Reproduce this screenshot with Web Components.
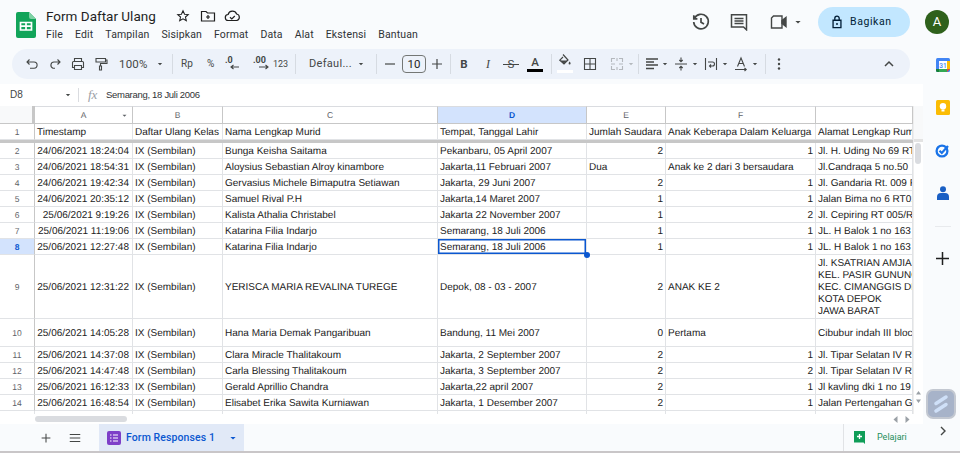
<!DOCTYPE html>
<html lang="id">
<head>
<meta charset="utf-8">
<title>Form Daftar Ulang</title>
<style>
  html, body { margin: 0; height: 100%; overflow: hidden; background: #f9fbfd; }
  body { font-family: Roboto, "Liberation Sans", sans-serif; }
</style>
</head>
<body>
<sheet-app>
  <doc-header slot="top"></doc-header>
  <tool-bar></tool-bar>
  <formula-bar cell="D8" value="Semarang, 18 Juli 2006"></formula-bar>
  <sheet-grid></sheet-grid>
  <sheet-tabs name="Form Responses 1"></sheet-tabs>
  <side-panel slot="side"></side-panel>
</sheet-app>

<script>
const ICON = {
  caret: '<path d="M4.5 6.5h7L8 10z" fill="currentColor" stroke="none"/>',
  undo: '<path d="M5.5 3.5 3 6l2.5 2.5M3.2 6H10a3 3 0 0 1 0 6.2H6"/>',
  redo: '<path d="M10.5 3.5 13 6l-2.5 2.5M12.8 6H7a3.2 3.2 0 0 0-1 6.2h2"/>',
  print: '<path d="M4.5 5.5V2.5h7v3M4.5 11.5h-2v-5a1 1 0 0 1 1-1h9a1 1 0 0 1 1 1v5h-2M4.5 9.5h7v4h-7z"/>',
  paint: '<path d="M3 2.5h9.5v3.5H3zM12.5 4H14v3.5H7.5V10M6.5 10h2v4h-2z"/>',
  fill: '<path d="M6 1.5 11 7 7 11 2.8 7.2 6 4" stroke-width="1.2"/><path d="M3.2 7.5h7L7 10.6zM12.6 8.5c.6.9 1 1.4 1 1.9a1 1 0 0 1-2 0c0-.5.4-1 1-1.9z" fill="currentColor" stroke="none"/>',
  borders: '<path d="M2.5 2.5h11v11h-11zM8 2.5v11M2.5 8h11"/>',
  merge: '<path d="M2.5 6V2.5H6M2.5 10v3.5H6M13.5 6V2.5H10M13.5 10v3.5H10M8 2v3M8 11v3M2 8h4M14 8h-4"/>',
  align: '<path d="M2 3h12M2 6h8M2 9h12M2 12.5h8" stroke-width="1.4"/>',
  valign: '<path d="M2 8h12M8 1.5v4M6.3 4 8 5.7 9.7 4M8 14.5v-4M6.3 12 8 10.3 9.7 12"/>',
  wrap: '<path d="M2.5 2v12M13.5 2v12M5 6h4.5a2 2 0 0 1 0 4H7M8 8.5 6.5 10 8 11.5"/>',
  rotate: '<path d="M4.5 10.5 8 2l3.5 8.5M5.8 7.5h4.4M2 13.5h11M11.5 12l1.7 1.5-1.7 1.5"/>',
  more: '<circle cx="8" cy="3.5" r="1.2" fill="currentColor" stroke="none"/><circle cx="8" cy="8" r="1.2" fill="currentColor" stroke="none"/><circle cx="8" cy="12.5" r="1.2" fill="currentColor" stroke="none"/>',
  up: '<path d="M4 10 8 6l4 4" stroke-width="1.5"/>',
  minus: '<path d="M3 8h10" stroke-width="1.2"/>',
  plus: '<path d="M8 3v10M3 8h10" stroke-width="1.2"/>'
};

function svgIcon(name, size) {
  return `<svg width="${size}" height="${size}" viewBox="0 0 16 16" fill="none" stroke="currentColor" stroke-width="1.1">${ICON[name]}</svg>`;
}

class SheetApp extends HTMLElement {
  constructor() {
    super();
    this.attachShadow({ mode: 'open' });
    this.shadowRoot.innerHTML = `
      <style>
        :host { display: grid; grid-template-columns: 923px 37px; grid-template-rows: 49px 402px 2px; width: 960px; height: 453px; overflow: hidden; }
        .top { grid-column: 1 / -1; }
        .main { display: flex; flex-direction: column; min-width: 0; }
        .edge { grid-column: 1 / -1; background: #c9c6c8; }
      </style>
      <div class="top"><slot name="top"></slot></div>
      <div class="main"><slot></slot></div>
      <slot name="side"></slot>
      <div class="edge"></div>
    `;
  }
}

class DocHeader extends HTMLElement {
  constructor() {
    super();
    this.attachShadow({ mode: 'open' });
    const menus = ['File', 'Edit', 'Tampilan', 'Sisipkan', 'Format', 'Data', 'Alat', 'Ekstensi', 'Bantuan'];
    this.shadowRoot.innerHTML = `
      <style>
        :host { display: flex; height: 49px; box-sizing: border-box; padding: 7px 11px 0 16px; color: #3c4043; }
        .logo { width: 20px; height: 26px; margin: 5px 10px 0 0; flex: none; }
        .names { flex: 1; min-width: 0; }
        .title { display: flex; align-items: center; height: 18px; color: #1f1f1f; }
        .title b { font: 400 13.5px/18px Roboto, sans-serif; width: 130px; flex: none; white-space: nowrap; }
        .title svg { margin-right: 8px; flex: none; }
        nav { display: flex; gap: 12px; margin-top: 3px; font: 400 10.5px/14px Roboto, sans-serif; letter-spacing: .13px; color: #303336; }
        .acts { display: flex; align-items: flex-start; flex: none; color: #444746; }
        .acts svg { flex: none; }
        .share { display: flex; align-items: center; width: 92px; height: 30px; margin-left: 14px; background: #c2e7ff; border-radius: 15px; box-sizing: border-box; padding-left: 12px; color: #001d35; font: 400 10.5px/30px Roboto, sans-serif; letter-spacing: .6px; gap: 6px; }
        .share span { white-space: nowrap; }
        .avatar { width: 24px; height: 24px; border-radius: 50%; background: #2f611c; color: #fff; text-align: center; font: 400 13px/24px Roboto, sans-serif; margin-left: 15px; margin-top: 3px; }
      </style>
      <svg class="logo" viewBox="0 0 20 26">
        <path d="M2 0h11l7 7v17a2 2 0 0 1-2 2H2a2 2 0 0 1-2-2V2a2 2 0 0 1 2-2z" fill="#12a45a"/>
        <path d="M13 0l7 7h-5a2 2 0 0 1-2-2z" fill="#7fd2a5"/>
        <path d="M4.5 10.5h11V18h-11zM10 10.5V18M4.5 14.2h11" fill="none" stroke="#fff" stroke-width="1.7"/>
      </svg>
      <div class="names">
        <div class="title">
          <b>Form Daftar Ulang</b>
          <svg width="14" height="14" viewBox="0 0 16 16" fill="none" stroke="currentColor" stroke-width="1.2"><path d="m8 2 1.8 4 4.2.4-3.2 2.8 1 4.2L8 11.2l-3.8 2.2 1-4.2L2 6.4 6.2 6z"/></svg>
          <svg width="16" height="14" viewBox="0 0 16 14" fill="none" stroke="currentColor" stroke-width="1.2" style="margin-left:2px"><path d="M1.5 2.500H6L7.500 4h7v8h-13zM8 6v4M6 8h4"/></svg>
          <svg width="17" height="14" viewBox="0 0 17 14" fill="none" stroke="currentColor" stroke-width="1.2"><path d="M4.5 11.5a3 3 0 0 1-.4-6 4.5 4.5 0 0 1 8.5-.5 3.3 3.3 0 0 1 0 6.5zM6 8.300l1.800 1.700 3-3"/></svg>
        </div>
        <nav>${menus.map((m) => `<span>${m}</span>`).join('')}</nav>
      </div>
      <div class="acts">
        <svg width="20" height="20" viewBox="0 0 20 20" fill="none" stroke="currentColor" stroke-width="1.7" style="margin-top:5px"><path d="M3.4 6.4A7.3 7.3 0 1 1 2.7 10M2.8 3.3v3.6h3.6M10 6v4.3l3 1.8"/></svg>
        <svg width="18" height="18" viewBox="0 0 18 18" fill="none" stroke="currentColor" stroke-width="1.5" style="margin:6px 0 0 19px"><path d="M1.5 1.8h15v15l-3-2.800h-12zM4.500 5.500h9M4.500 8h9M4.500 10.500h9"/></svg>
        <svg width="18" height="16" viewBox="0 0 18 16" fill="none" stroke="currentColor" stroke-width="1.4" style="margin:7px 0 0 22px"><path d="M3.5 2H12v12H1.5V4z"/><path d="M12 6.5 16 3.500v9l-4-3z" fill="currentColor"/></svg>
        <svg width="12" height="12" viewBox="0 0 16 16" style="margin:9px 0 0 4px;color:#444746">${ICON.caret}</svg>
        <div class="share">
          <svg width="14" height="14" viewBox="0 0 16 16" fill="none" stroke="currentColor" stroke-width="1.5"><path d="M3.5 6h9v8.500h-9zM5.500 6V3.800a2.500 2.500 0 0 1 5 0V6"/><circle cx="8" cy="10.200" r="1.100" fill="currentColor" stroke="none"/></svg>
          <span>Bagikan</span>
        </div>
        <div class="avatar">A</div>
      </div>
    `;
  }
}

class ToolBar extends HTMLElement {
  constructor() {
    super();
    this.attachShadow({ mode: 'open' });
    // tiap item: jenis, isi, margin kiri
    const items = [
      ['i', 'undo', 0], ['i', 'redo', 7], ['i', 'print', 7], ['i', 'paint', 7],
      ['t', '100%', 10, 28, 'z'], ['c', '', 9], ['s', '', 8],
      ['t', 'Rp', 8, 14], ['t', '%', 12, 12], ['dec', '.0', 6, 'l'], ['dec', '.00', 10, 'r'], ['t', '123', 2, 15, 'n'], ['s', '', 7],
      ['t', 'Defaul...', 13, 42, 'z2'], ['c', '', 6], ['s', '', 11],
      ['i', 'minus', 5], ['box', '10', 4], ['i', 'plus', 3], ['s', '', 5],
      ['b', 'B', 5], ['b', 'I', 8], ['b', 'S', 7], ['b', 'A', 8], ['s', '', 8],
      ['fill', '', 5], ['i', 'borders', 9], ['d', 'merge', 11], ['cd', '', 2], ['s', '', 3],
      ['i', 'align', 5], ['c', '', 1], ['i', 'valign', 4], ['c', '', 2], ['i', 'wrap', 4], ['c', '', 2], ['i', 'rotate', 4], ['c', '', 2], ['s', '', 6],
      ['i', 'more', 5]
    ];
    const html = items.map((it) => {
      const [kind, val, ml] = it;
      const m = `style="margin-left:${ml}px"`;
      if (kind === 'i') return `<span class="i" ${m}>${svgIcon(val, 16)}</span>`;
      if (kind === 'd') return `<span class="i dis" ${m}>${svgIcon(val, 16)}</span>`;
      if (kind === 'c') return `<span class="i c" ${m}>${svgIcon('caret', 10)}</span>`;
      if (kind === 'cd') return `<span class="i c dis" ${m}>${svgIcon('caret', 10)}</span>`;
      if (kind === 's') return `<span class="sep" ${m}></span>`;
      if (kind === 't') return `<span class="t ${it[4] || ''}" style="margin-left:${ml}px;width:${it[3]}px">${val}</span>`;
      if (kind === 'box') return `<span class="box" ${m}>${val}</span>`;
      if (kind === 'dec') {
        const arrow = it[3] === 'l' ? 'M14 11H6M8.5 9 6 11l2.5 2' : 'M6 11h9M12.5 9l2.5 2-2.5 2';
        return `<span class="dec" ${m}><em>${val}</em><svg width="18" height="16" viewBox="0 0 18 16" fill="none" stroke="currentColor" stroke-width="1.1"><path d="${arrow}"/></svg></span>`;
      }
      if (kind === 'b') {
        const bar = val === 'A' ? '<u></u>' : '';
        const strike = val === 'S' ? '<s></s>' : '';
        return `<span class="b b${val}" ${m}>${val}${bar}${strike}</span>`;
      }
      if (kind === 'fill') return `<span class="i col" ${m}>${svgIcon('fill', 16)}<u></u></span>`;
      return '';
    }).join('');
    this.shadowRoot.innerHTML = `
      <style>
        :host { display: flex; align-items: center; width: 898px; height: 30px; margin: 0 0 5px 12px; box-sizing: border-box; padding-left: 12px; padding-right: 13px; background: #edf2fa; border-radius: 15px; color: #444746; font: 400 10.5px/16px Roboto, sans-serif; }
        .i { display: flex; align-items: center; justify-content: center; width: 16px; height: 16px; flex: none; }
        .c { width: 8px; }
        .c svg { flex: none; }
        .dis { color: #b4b8bd; }
        .sep { width: 1px; height: 20px; background: #d6dbe2; flex: none; }
        .t { flex: none; white-space: nowrap; font-size: 10px; letter-spacing: .2px; }
        .z { font-size: 11.5px; letter-spacing: .2px; }
        .z2 { font-size: 11px; letter-spacing: .3px; }
        .n { font-size: 9px; letter-spacing: 0; }
        .box { width: 22px; height: 16px; border: 1px solid #747775; border-radius: 4px; text-align: center; line-height: 16px; font-size: 11.5px; color: #1f1f1f; flex: none; }
        .dec { position: relative; width: 18px; height: 16px; flex: none; }
        .dec svg { display: block; }
        .dec em { position: absolute; left: 0; top: -2px; font: 700 9px/12px Roboto, sans-serif; }
        .b { position: relative; width: 16px; height: 16px; text-align: center; flex: none; font: 700 11.5px/16px Roboto, sans-serif; }
        .bI { font: italic 500 12px/16px "Liberation Serif", serif; }
        .bS { font-weight: 400; }
        .bS s { position: absolute; left: 0; right: 0; top: 8px; height: 1px; background: currentColor; }
        .bA { font-weight: 500; line-height: 12px; }
        .b u { position: absolute; left: 0; right: 0; top: 13px; height: 3px; background: #000; }
        .col { position: relative; }
        .col svg { position: relative; top: -3px; }
        .col u { position: absolute; left: 0; right: 0; top: 14px; height: 3px; background: #fff; }
        .end { margin-left: auto; }
      </style>
      ${html}
      <span class="i end">${svgIcon('up', 16)}</span>
    `;
  }
}

class FormulaBar extends HTMLElement {
  constructor() {
    super();
    this.attachShadow({ mode: 'open' });
    this.shadowRoot.innerHTML = `
      <style>
        :host { display: flex; align-items: center; height: 22px; box-sizing: border-box; background: #fff; color: #444746; font: 400 10px/14px "Liberation Sans", sans-serif; }
        .name { width: 53px; padding-left: 10px; flex: none; }
        svg { flex: none; }
        .sep { width: 1px; height: 14px; background: #dadce0; margin: 0 9px 0 5px; flex: none; }
        .fx { font: italic 400 13px/14px "Liberation Serif", serif; color: #9aa0a6; width: 18px; flex: none; }
        .val { color: #303336; font-size: 9.5px; letter-spacing: -.3px; white-space: nowrap; }
      </style>
      <span class="name">${this.getAttribute('cell')}</span>
      <svg width="10" height="10" viewBox="0 0 16 16">${ICON.caret}</svg>
      <span class="sep"></span>
      <span class="fx">fx</span>
      <span class="val">${this.getAttribute('value')}</span>
    `;
  }
}

const COLS = ['A', 'B', 'C', 'D', 'E', 'F', ''];
const ROWS = [
  [1, 16, 'Timestamp', 'Daftar Ulang Kelas', 'Nama Lengkap Murid', 'Tempat, Tanggal Lahir', 'Jumlah Saudara', 'Anak Keberapa Dalam Keluarga', 'Alamat Lengkap Rumah'],
  [2, 16, '24/06/2021 18:24:04', 'IX (Sembilan)', 'Bunga Keisha Saitama', 'Pekanbaru, 05 April 2007', 2, 1, 'Jl. H. Uding No 69 RT 001'],
  [3, 16, '24/06/2021 18:54:31', 'IX (Sembilan)', 'Aloysius Sebastian Alroy kinambore', 'Jakarta,11 Februari 2007', 'Dua', 'Anak ke 2 dari 3 bersaudara', 'Jl.Candraqa 5 no.50'],
  [4, 16, '24/06/2021 19:42:34', 'IX (Sembilan)', 'Gervasius Michele Bimaputra Setiawan', 'Jakarta, 29 Juni 2007', 2, 1, 'Jl. Gandaria Rt. 009 Rw 02'],
  [5, 16, '24/06/2021 20:35:12', 'IX (Sembilan)', 'Samuel Rival P.H', 'Jakarta,14 Maret 2007', 1, 1, 'Jalan Bima no 6 RT01'],
  [6, 16, '25/06/2021 9:19:26', 'IX (Sembilan)', 'Kalista Athalia Christabel', 'Jakarta 22 November 2007', 1, 2, 'Jl. Cepiring RT 005/RW'],
  [7, 16, '25/06/2021 11:19:06', 'IX (Sembilan)', 'Katarina Filia Indarjo', 'Semarang, 18 Juli 2006', 1, 1, 'JL. H Balok 1 no 163'],
  [8, 16, '25/06/2021 12:27:48', 'IX (Sembilan)', 'Katarina Filia Indarjo', 'Semarang, 18 Juli 2006', 1, 1, 'JL. H Balok 1 no 163'],
  [9, 64, '25/06/2021 12:31:22', 'IX (Sembilan)', 'YERISCA MARIA REVALINA TUREGE', 'Depok, 08 - 03 - 2007', 2, 'ANAK KE 2', 'Jl. KSATRIAN AMJIAD\nKEL. PASIR GUNUNG\nKEC. CIMANGGIS DEPOK\nKOTA DEPOK\nJAWA BARAT'],
  [10, 28, '25/06/2021 14:05:28', 'IX (Sembilan)', 'Hana Maria Demak Pangaribuan', 'Bandung, 11 Mei 2007', 0, 'Pertama', 'Cibubur indah III blocks'],
  [11, 16, '25/06/2021 14:37:08', 'IX (Sembilan)', 'Clara Miracle Thalitakoum', 'Jakarta, 2 September 2007', 2, 1, 'Jl. Tipar Selatan IV RT'],
  [12, 16, '25/06/2021 14:47:48', 'IX (Sembilan)', 'Carla Blessing Thalitakoum', 'Jakarta, 3 September 2007', 2, 2, 'Jl. Tipar Selatan IV RT'],
  [13, 16, '25/06/2021 16:12:33', 'IX (Sembilan)', 'Gerald Aprillio Chandra', 'Jakarta,22 april 2007', 2, 1, 'Jl kavling dki 1 no 19'],
  [14, 16, '25/06/2021 16:48:54', 'IX (Sembilan)', 'Elisabet Erika Sawita Kurniawan', 'Jakarta, 1 Desember 2007', 2, 1, 'Jalan Pertengahan Gg']
];

class SheetGrid extends HTMLElement {
  constructor() {
    super();
    this.attachShadow({ mode: 'open' });
    const head = ['<div class="corner"></div>']
      .concat(COLS.map((c) => `<div class="ch ${c === 'D' ? 'on' : ''}">${c}${c === 'A' ? `<span class="mark">${svgIcon('caret', 9)}</span>` : ''}</div>`)).join('');
    let body = '';
    ROWS.forEach((row) => {
      const n = row[0];
      body += `<div class="rh ${n === 8 ? 'on' : ''}">${n}</div>`;
      row.slice(2).forEach((v, i) => {
        const text = String(v);
        const isStamp = i === 0 && n > 1;
        const right = typeof v === 'number' || isStamp;
        const sel = n === 8 && i === 3;
        const multi = text.includes('\n');
        body += `<div class="cell ${right ? 'r' : ''} ${isStamp ? 'ts' : ''} ${sel ? 'sel' : ''} ${multi ? 'multi' : ''}"><span>${text}</span></div>`;
      });
      if (n === 1) body += '<div class="freeze"></div>';
    });
    const rowTracks = ROWS.map((r) => r[1] + 'px');
    rowTracks.splice(1, 0, '3px');
    this.shadowRoot.innerHTML = `
      <style>
        :host { display: grid; grid-template-columns: 913px 10px; grid-template-rows: 308px 10px; height: 318px; background: #fff; color: #222; font: 400 10px/12px "Liberation Sans", sans-serif; text-rendering: geometricPrecision; }
        .tbl { display: grid; grid-template-columns: 35px 98px 90px 215px 149px 79px 150px 97px; grid-template-rows: 18px ${rowTracks.join(' ')} 3px; overflow: hidden; }
        .corner { background: #f8f9fa; border-right: 3px solid #c7c7c7; border-bottom: 1px solid #c7c7c7; box-sizing: border-box; }
        .ch, .rh { display: flex; align-items: center; justify-content: center; background: #fff; color: #5f6368; font-size: 8.5px; box-sizing: border-box; position: relative; }
        .ch { border-top: 1px solid #dadce0; border-right: 1px solid #c7c7c7; border-bottom: 1px solid #c7c7c7; }
        .rh { border-right: 1px solid #c7c7c7; border-bottom: 1px solid #e1e3e6; padding-top: 1px; }
        .on { background: #d3e3fd; color: #0b57d0; font-weight: 700; }
        .mark { position: absolute; right: 3px; top: 4px; color: #5f6368; display: flex; }
        .cell { display: flex; align-items: center; min-width: 0; padding: 3px 2px 0; box-sizing: border-box; border-right: 1px solid #e1e3e6; border-bottom: 1px solid #e1e3e6; white-space: nowrap; overflow: hidden; position: relative; }
        .cell.r { justify-content: flex-end; }
        .cell.ts { padding-right: 3px; }
        .multi span { white-space: pre; }
        .sel { overflow: visible; box-shadow: inset 0 0 0 1.5px #0b57d0; }
        .sel::after { content: ""; position: absolute; right: -4px; bottom: -4px; width: 6px; height: 6px; background: #0b57d0; border-radius: 50%; z-index: 2; }
        .freeze { grid-column: 1 / -1; background: #c7c7c7; }
        .stub { border-right: 1px solid #e1e3e6; }
        .vs { background: #fff; border-left: 1px solid #eee; display: flex; flex-direction: column; }
        .vs .top { height: 36px; background: #f8f9fa; border-bottom: 3px solid #e3e3e3; box-sizing: border-box; flex: none; }
        .vs .thumb { width: 6px; height: 21px; background: #dadce0; border-radius: 3px; margin: 1px 0 0 1px; flex: none; }
        .vs .arr { margin-top: auto; padding: 0 0 3px 1px; color: #9aa0a6; font-size: 0; }
        .hs { grid-column: 1 / -1; display: flex; align-items: center; background: #fff; }
        .hs .thumb { width: 92px; height: 6px; background: #dadce0; border-radius: 3px; margin-left: 35px; }
        .hs .arr { margin-left: auto; margin-right: 13px; display: flex; gap: 7px; color: #9aa0a6; }
      </style>
      <div class="tbl">
        ${head}
        ${body}
        ${Array(8).fill('<div class="stub"></div>').join('')}
      </div>
      <div class="vs">
        <div class="top"></div>
        <div class="thumb"></div>
        <div class="arr">
          <svg width="7" height="16" viewBox="0 0 7 16" fill="currentColor"><path d="M3.5 2 6 5.5H1zM3.5 14 1 10.5h5z"/></svg>
        </div>
      </div>
      <div class="hs">
        <div class="thumb"></div>
        <div class="arr">
          <svg width="5" height="7" viewBox="0 0 5 7" fill="currentColor"><path d="M4.5 0v7L.5 3.5z"/></svg>
          <svg width="5" height="7" viewBox="0 0 5 7" fill="currentColor"><path d="M.5 0v7l4-3.5z"/></svg>
        </div>
      </div>
    `;
  }
}

class SheetTabs extends HTMLElement {
  constructor() {
    super();
    this.attachShadow({ mode: 'open' });
    this.shadowRoot.innerHTML = `
      <style>
        :host { display: flex; align-items: stretch; height: 27px; box-sizing: border-box; background: #f9fbfd; color: #444746; }
        .btn { display: flex; align-items: center; justify-content: center; flex: none; }
        .tab { display: flex; align-items: center; width: 145px; margin-left: 11px; background: #e1e9f7; box-sizing: border-box; padding-left: 8px; color: #0b57d0; font: 500 10.5px/27px Roboto, sans-serif; letter-spacing: .1px; flex: none; }
        .tab span { margin-left: 5px; white-space: nowrap; }
        .tab .c { margin-left: 12px; display: flex; }
        .learn { margin-left: auto; width: 80px; display: flex; align-items: center; border-left: 1px solid #e1e3e6; box-sizing: border-box; padding-left: 10px; color: #1e8e5a; font: 400 9px/27px Roboto, sans-serif; }
        .learn svg { margin-right: 12px; flex: none; }
      </style>
      <div class="btn" style="width:32px;margin-left:30px">${svgIcon('plus', 14)}</div>
      <div class="btn" style="width:26px">
        <svg width="14" height="14" viewBox="0 0 16 16" fill="none" stroke="currentColor" stroke-width="1.3"><path d="M2 4h12M2 8h12M2 12h12"/></svg>
      </div>
      <div class="tab">
        <svg width="14" height="14" viewBox="0 0 14 14"><rect width="14" height="14" rx="2" fill="#7e3fc8"/><path d="M3 4h1.5M3 7h1.5M3 10h1.5M6 4h5M6 7h5M6 10h5" stroke="#fff" stroke-width="1.2"/></svg>
        <span>${this.getAttribute('name')}</span>
        <i class="c">${svgIcon('caret', 12)}</i>
      </div>
      <div class="learn">
        <svg width="11" height="13" viewBox="0 0 11 13"><path d="M0 0h11v13l-1.5-1.5H0z" fill="#0f9d58"/><path d="M5.5 3v5M3 5.5h5" stroke="#fff" stroke-width="1.3"/></svg>
        Pelajari
      </div>
    `;
  }
}

class SidePanel extends HTMLElement {
  constructor() {
    super();
    this.attachShadow({ mode: 'open' });
    this.shadowRoot.innerHTML = `
      <style>
        :host { display: flex; flex-direction: column; align-items: center; box-sizing: border-box; padding: 9px 0 0 2px; background: #f9fbfd; }
        svg { display: block; flex: none; }
        .rule { width: 16px; height: 1px; background: #e8eaed; margin: 26px 0 0; }
        .ai { margin-top: 124px; width: 30px; height: 30px; margin-left: -3px; box-sizing: border-box; border-radius: 7px; background: #a7b3c9; border: 2px solid #c3c8d1; display: flex; align-items: center; justify-content: center; flex: none; }
        .arrow { margin-top: 6px; color: #444746; }
      </style>
      <svg width="14" height="14" viewBox="0 0 14 14">
        <rect width="14" height="14" rx="1.5" fill="#4285f4"/>
        <path d="M11 3v8H3V3z" fill="#fff"/>
        <path d="M11 3h3v8h-3z" fill="#fbbc04"/>
        <path d="M3 11h8v3H3z" fill="#34a853"/>
        <path d="M0 11h3v3H1.500A1.500 1.500 0 0 1 0 12.500z" fill="#188038"/>
        <path d="M11 11h3l-3 3z" fill="#ea4335"/>
        <text x="7" y="9.800" font-family="Roboto, sans-serif" font-size="6.5" font-weight="500" fill="#4285f4" text-anchor="middle">31</text>
      </svg>
      <svg width="14" height="15" viewBox="0 0 14 15" style="margin-top:28px">
        <rect width="14" height="15" rx="1.5" fill="#fbbc04"/>
        <circle cx="7" cy="6.3" r="3.2" fill="#fff"/>
        <path d="M5.5 9.5h3v2h-3z" fill="#fff"/>
      </svg>
      <svg width="15" height="15" viewBox="0 0 15 15" style="margin-top:28px" fill="none">
        <circle cx="7" cy="8" r="5.4" stroke="#1a73e8" stroke-width="2.3"/>
        <path d="m4.5 7.8 2.3 2.2L13 3" stroke="#1a73e8" stroke-width="2.2"/>
      </svg>
      <svg width="14" height="14" viewBox="0 0 14 14" style="margin-top:28px">
        <circle cx="7" cy="3.3" r="3" fill="#1a5fc4"/>
        <path d="M1 14v-3a4 4 0 0 1 4-4h4a4 4 0 0 1 4 4v3z" fill="#1a5fc4"/>
      </svg>
      <div class="rule"></div>
      <svg width="13" height="13" viewBox="0 0 13 13" style="margin-top:25px" fill="none" stroke="#1f1f1f" stroke-width="1.5"><path d="M6.5 0v13M0 6.5h13"/></svg>
      <div class="ai">
        <svg width="18" height="20" viewBox="0 0 18 20" fill="none" stroke="#cfe0f8" stroke-width="3.5" stroke-linecap="round"><path d="M14 3 4 9.500M14 10.500 4 17"/></svg>
      </div>
      <svg class="arrow" width="10" height="12" viewBox="0 0 10 12" fill="none" stroke="currentColor" stroke-width="1.4"><path d="m3 2 4 4-4 4"/></svg>
    `;
  }
}

customElements.define('sheet-app', SheetApp);
customElements.define('doc-header', DocHeader);
customElements.define('tool-bar', ToolBar);
customElements.define('formula-bar', FormulaBar);
customElements.define('sheet-grid', SheetGrid);
customElements.define('sheet-tabs', SheetTabs);
customElements.define('side-panel', SidePanel);
</script>
</body>
</html>
